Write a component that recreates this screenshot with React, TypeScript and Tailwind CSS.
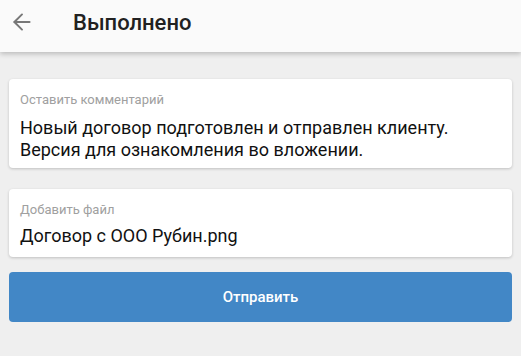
import { ArrowLeft } from 'lucide-react';

export default function App() {
  return (
    <div className="w-[521px] h-[356px] bg-[#efefef] overflow-hidden font-['Roboto',sans-serif]">
      {/* App bar */}
      <div className="h-[52px] pb-[8px] bg-[#fafafa] flex items-center shadow-[0_2px_5px_rgba(0,0,0,0.22)] relative">
        <ArrowLeft size={26} strokeWidth={1.8} className="ml-[9px] text-[#777]" />
        <h1 className="ml-[38px] text-[22px] font-medium text-[#212121]">Выполнено</h1>
      </div>

      <div className="px-[9px] pt-[27px] flex flex-col">
        {/* Comment field */}
        <div className="bg-white rounded-[4px] shadow-[0_1px_3px_rgba(0,0,0,0.2)] px-[11px] pt-[12px] pb-[7px]">
          <div className="text-[13px] leading-[18px] text-[#a0a0a0]">Оставить комментарий</div>
          <p className="mt-[8px] text-[18px] leading-[22px] text-[#111]">
            Новый договор подготовлен и отправлен клиенту.
            <br />
            Версия для ознакомления во вложении.
          </p>
        </div>

        {/* File field */}
        <div className="mt-[21px] bg-white rounded-[4px] shadow-[0_1px_3px_rgba(0,0,0,0.2)] px-[11px] pt-[12px] pb-[10px]">
          <div className="text-[13px] leading-[18px] text-[#a0a0a0]">Добавить файл</div>
          <p className="mt-[6px] text-[18px] leading-[22px] text-[#111]">Договор с ООО Рубин.png</p>
        </div>

        <button className="mt-[15px] h-[50px] w-full rounded-[4px] bg-[#4287c6] text-white text-[15px] font-medium">
          Отправить
        </button>
      </div>
    </div>
  );
}
